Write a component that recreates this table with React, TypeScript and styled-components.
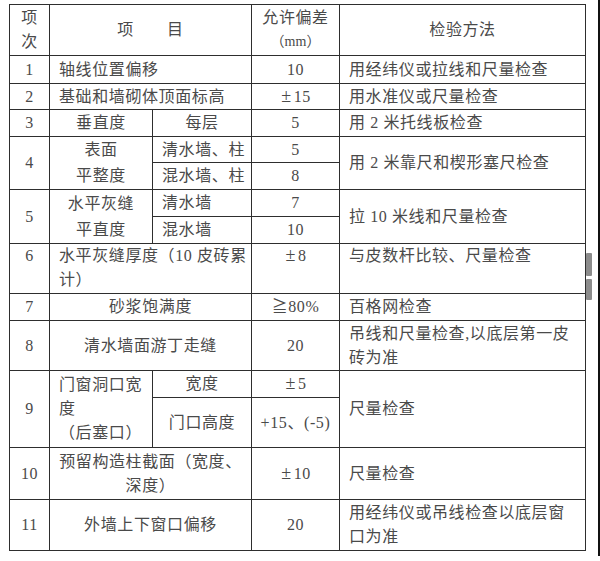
import React from 'react';
import styled, { createGlobalStyle } from 'styled-components';

const Global = createGlobalStyle`
  html, body { margin: 0; padding: 0; background: #fff; }
  body {
    font-family: "Liberation Serif", "Noto Sans CJK SC", serif;
    color: #4a4a4a;
  }
`;

const Page = styled.div`
  position: relative;
  width: 600px;
  height: 561px;
  box-sizing: border-box;
  padding: 4px 0 0 9px;
  overflow: hidden;
  background: #fff;
`;

const Table = styled.table`
  border-collapse: collapse;
  table-layout: fixed;
  width: 576px;
  font-size: 16px;
  letter-spacing: 0.6px;
  line-height: 24px;
`;

const Row = styled.tr<{ $h: number; $top?: boolean }>`
  height: ${(p) => p.$h}px;
  & > td {
    vertical-align: ${(p) => (p.$top ? 'top' : 'middle')};
  }
`;

const Cell = styled.td<{ $align?: 'left' | 'center'; $lh?: number }>`
  border: 1.5px solid #2e2e2e;
  padding: 0 0 0 ${(p) => (p.$align === 'left' ? '9px' : '0')};
  text-align: ${(p) => p.$align ?? 'center'};
  white-space: nowrap;
  overflow: hidden;
  ${(p) => (p.$lh ? `line-height: ${p.$lh}px;` : '')}
`;

const Small = styled.span`
  display: block;
  font-size: 14px;
  letter-spacing: 0;
`;

const Pm = styled.span`
  font-size: 18px;
  line-height: 16px;
  padding: 0 2px 0 1px;
`;

const Scroll = styled.div`
  position: absolute;
  left: 586px;
  top: 253px;
  width: 6px;
  display: flex;
  flex-direction: column;
  gap: 3px;
`;

const ScrollPart = styled.div<{ $h: number }>`
  height: ${(p) => p.$h}px;
  background: #8c8c8c;
  border-radius: 1px;
`;

const Edge = styled.div`
  position: absolute;
  right: 0;
  top: 0;
  width: 2px;
  height: 556px;
  background: #111;
`;

export default function App() {
  return (
    <>
      <Global />
      <Page>
        <Table>
          <colgroup>
            <col style={{ width: 40 }} />
            <col style={{ width: 103 }} />
            <col style={{ width: 99 }} />
            <col style={{ width: 88 }} />
            <col style={{ width: 246 }} />
          </colgroup>
          <tbody>
            <Row $h={51}>
              <Cell>项<br />次</Cell>
              <Cell colSpan={2}>项　　目</Cell>
              <Cell>允许偏差<Small>（mm）</Small></Cell>
              <Cell>检验方法</Cell>
            </Row>
            <Row $h={28}>
              <Cell>1</Cell>
              <Cell colSpan={2} $align="left">轴线位置偏移</Cell>
              <Cell>10</Cell>
              <Cell $align="left">用经纬仪或拉线和尺量检查</Cell>
            </Row>
            <Row $h={26}>
              <Cell>2</Cell>
              <Cell colSpan={2} $align="left">基础和墙砌体顶面标高</Cell>
              <Cell><Pm>±</Pm>15</Cell>
              <Cell $align="left">用水准仪或尺量检查</Cell>
            </Row>
            <Row $h={27}>
              <Cell>3</Cell>
              <Cell>垂直度</Cell>
              <Cell>每层</Cell>
              <Cell>5</Cell>
              <Cell $align="left">用 2 米托线板检查</Cell>
            </Row>
            <Row $h={26}>
              <Cell rowSpan={2}>4</Cell>
              <Cell rowSpan={2} $lh={26}>表面<br />平整度</Cell>
              <Cell $align="left">清水墙、柱</Cell>
              <Cell>5</Cell>
              <Cell rowSpan={2} $align="left">用 2 米靠尺和楔形塞尺检查</Cell>
            </Row>
            <Row $h={27}>
              <Cell $align="left">混水墙、柱</Cell>
              <Cell>8</Cell>
            </Row>
            <Row $h={27}>
              <Cell rowSpan={2}>5</Cell>
              <Cell rowSpan={2} $lh={26}>水平灰缝<br />平直度</Cell>
              <Cell $align="left">清水墙</Cell>
              <Cell>7</Cell>
              <Cell rowSpan={2} $align="left">拉 10 米线和尺量检查</Cell>
            </Row>
            <Row $h={27}>
              <Cell $align="left">混水墙</Cell>
              <Cell>10</Cell>
            </Row>
            <Row $h={50} $top>
              <Cell>6</Cell>
              <Cell colSpan={2} $align="left">水平灰缝厚度（10 皮砖累<br />计）</Cell>
              <Cell><Pm>±</Pm>8</Cell>
              <Cell $align="left">与皮数杆比较、尺量检查</Cell>
            </Row>
            <Row $h={27}>
              <Cell>7</Cell>
              <Cell colSpan={2}>砂浆饱满度</Cell>
              <Cell>≧80%</Cell>
              <Cell $align="left">百格网检查</Cell>
            </Row>
            <Row $h={50}>
              <Cell>8</Cell>
              <Cell colSpan={2}>清水墙面游丁走缝</Cell>
              <Cell>20</Cell>
              <Cell $align="left">吊线和尺量检查,以底层第一皮<br />砖为准</Cell>
            </Row>
            <Row $h={27}>
              <Cell rowSpan={2}>9</Cell>
              <Cell rowSpan={2} $align="left">门窗洞口宽<br />度<br />（后塞口）</Cell>
              <Cell>宽度</Cell>
              <Cell><Pm>±</Pm>5</Cell>
              <Cell rowSpan={2} $align="left">尺量检查</Cell>
            </Row>
            <Row $h={50}>
              <Cell>门口高度</Cell>
              <Cell>+15、(-5)</Cell>
            </Row>
            <Row $h={52}>
              <Cell>10</Cell>
              <Cell colSpan={2}>预留构造柱截面（宽度、<br />深度）</Cell>
              <Cell><Pm>±</Pm>10</Cell>
              <Cell $align="left">尺量检查</Cell>
            </Row>
            <Row $h={51}>
              <Cell>11</Cell>
              <Cell colSpan={2}>外墙上下窗口偏移</Cell>
              <Cell>20</Cell>
              <Cell $align="left">用经纬仪或吊线检查以底层窗<br />口为准</Cell>
            </Row>
          </tbody>
        </Table>
        <Scroll>
          <ScrollPart $h={23} />
          <ScrollPart $h={21} />
        </Scroll>
        <Edge />
      </Page>
    </>
  );
}
